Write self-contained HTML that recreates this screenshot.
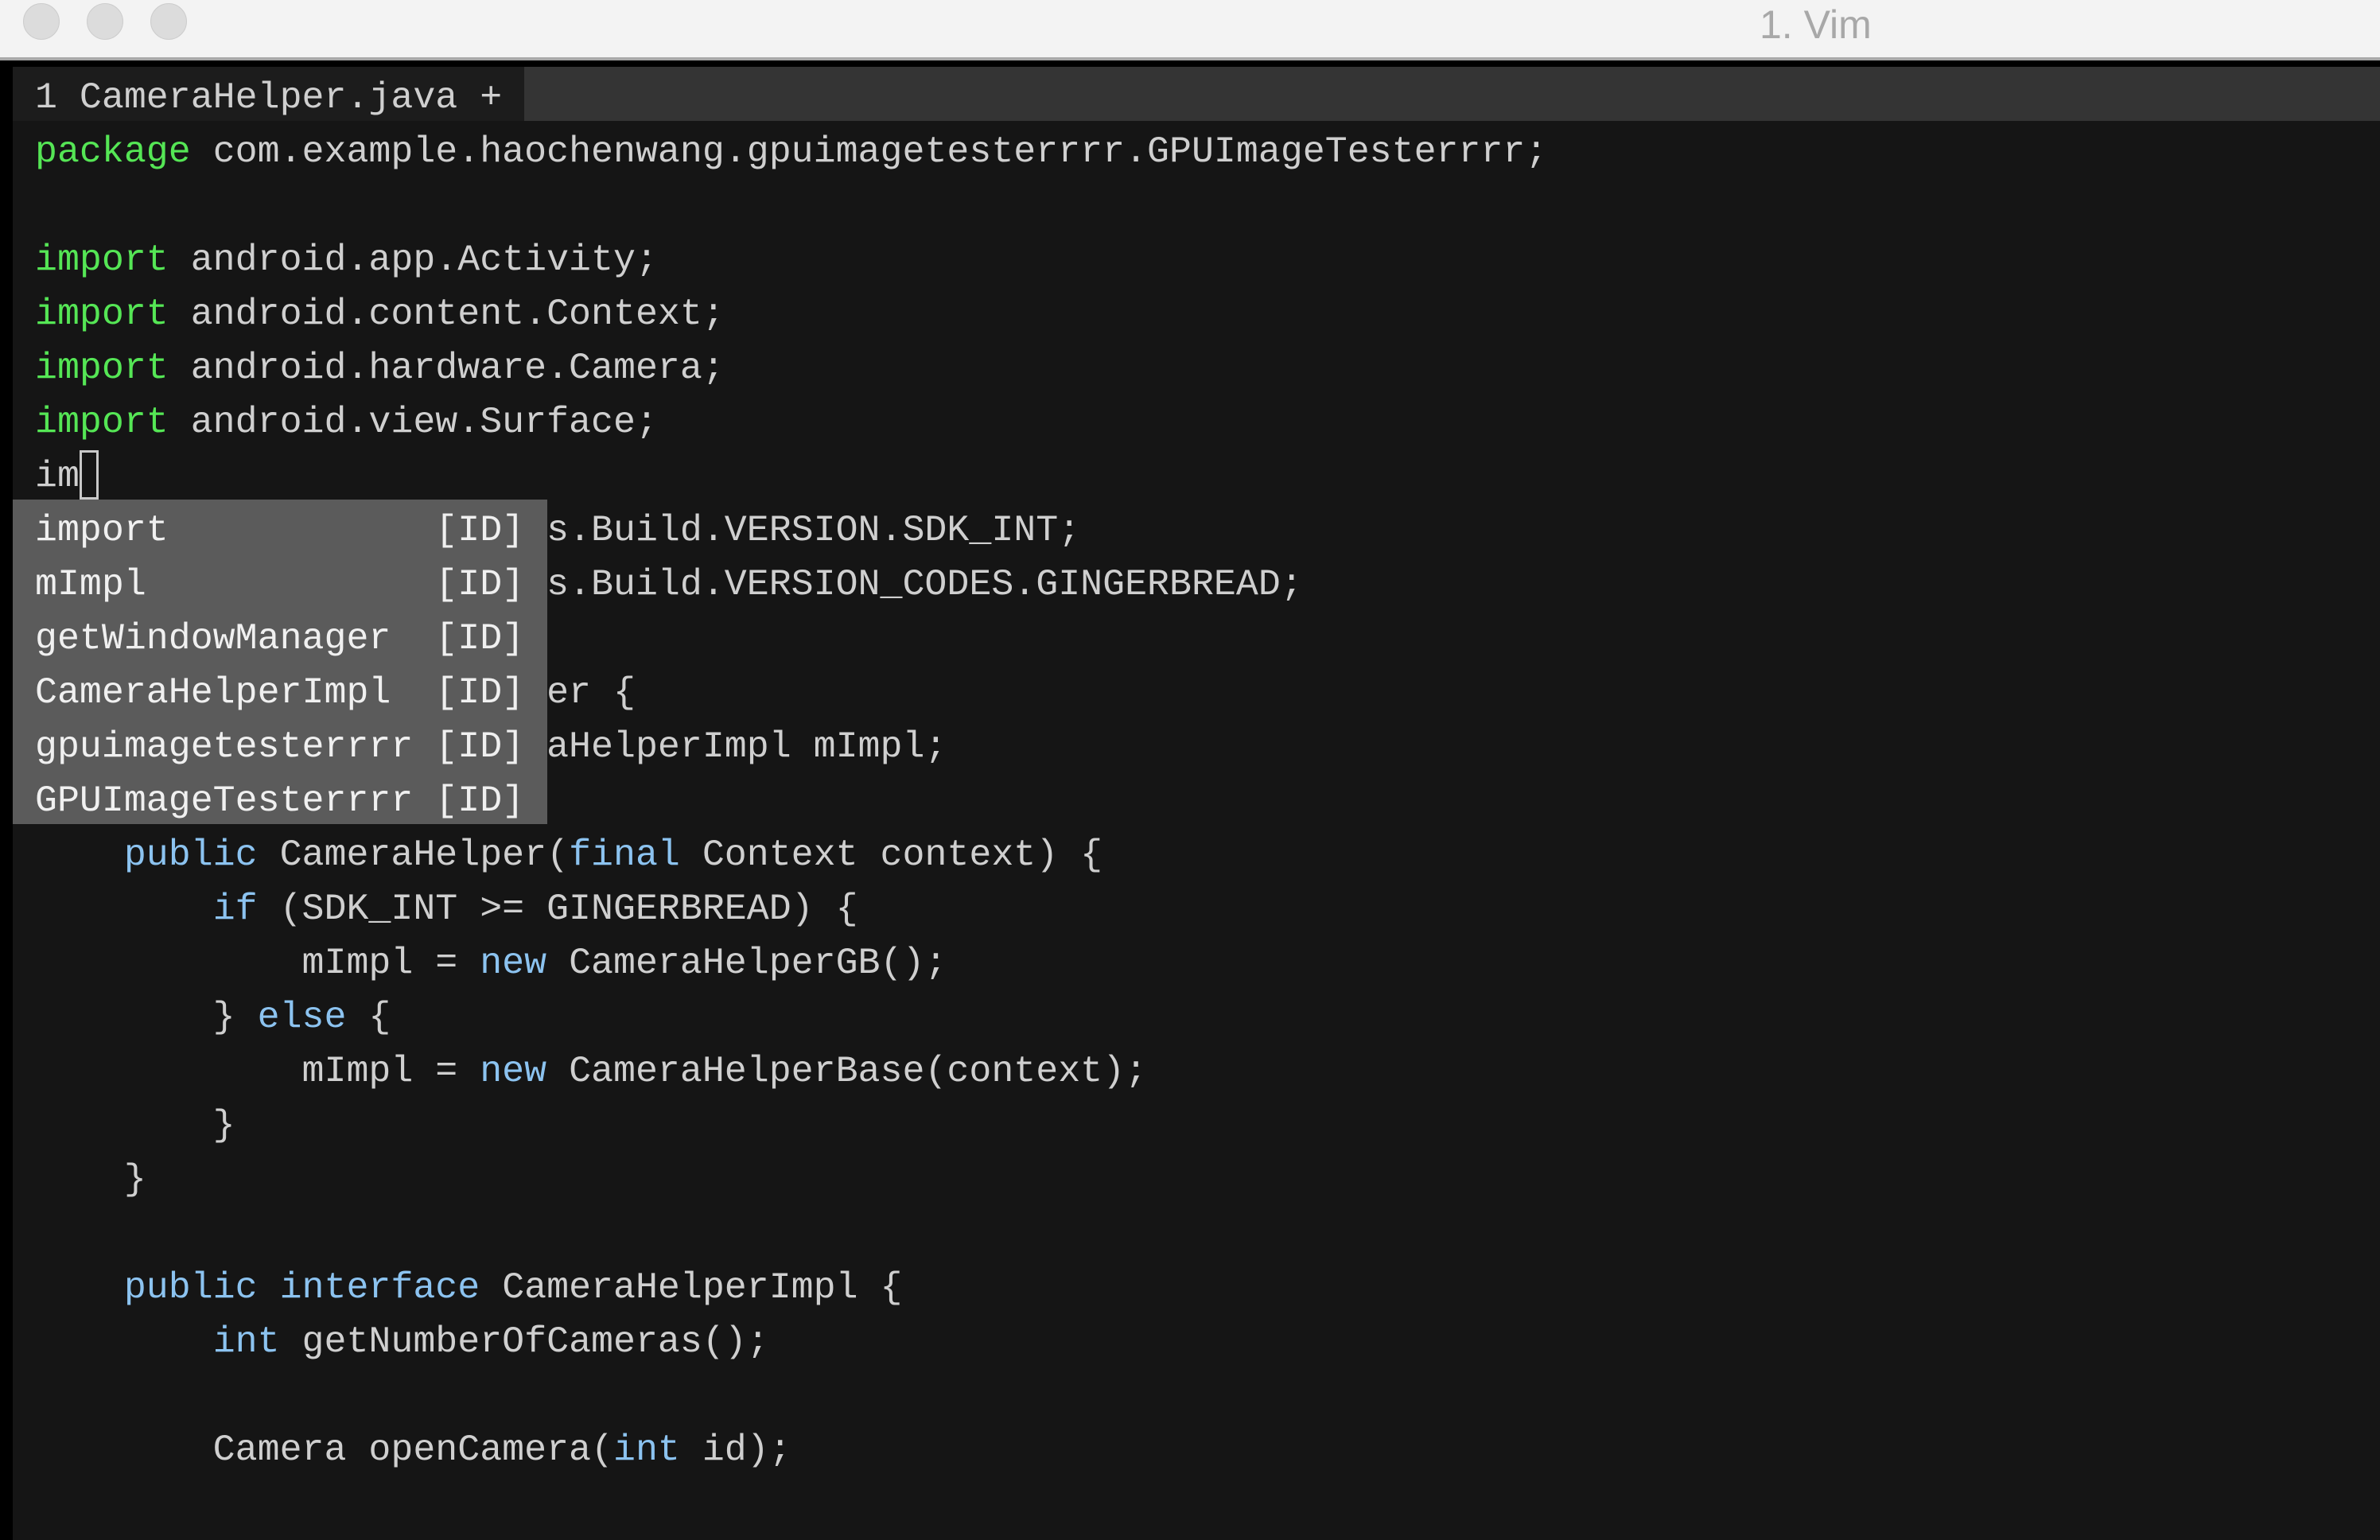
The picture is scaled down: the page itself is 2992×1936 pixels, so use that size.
<!DOCTYPE html>
<html><head><meta charset="utf-8"><style>
html,body{margin:0;padding:0;width:2992px;height:1936px;overflow:hidden;background:#151515;}
#wrap{position:relative;width:2992px;height:1936px;overflow:hidden;}
#title{position:absolute;left:0;top:0;width:2992px;height:72px;background:#f3f3f3;border-bottom:4px solid #a9a9a9;}
.dot{position:absolute;top:4px;width:46px;height:46px;border-radius:50%;background:#dcdcdc;border:1px solid #cdcdcd;box-sizing:border-box;}
#ttl{position:absolute;left:2212px;top:2px;font:50px "Liberation Sans",sans-serif;color:#a8a8a8;}
#blk{position:absolute;left:0;top:76px;width:2992px;height:8px;background:#000;}
#lb{position:absolute;left:0;top:76px;width:16px;height:1860px;background:#000;}
#tabbar{position:absolute;left:16px;top:84px;width:2976px;height:68px;background:#343434;}
#tab{position:absolute;left:16px;top:84px;width:643px;height:68px;background:#1c1c1c;}
#code{position:absolute;left:44px;top:89px;margin:0;font:46.6px/68px "Liberation Mono",monospace;color:#cfcfcf;white-space:pre;}
.g{color:#55e655}.b{color:#8cc3f0}
#pop{position:absolute;left:16px;top:628px;width:672px;height:408px;background:#5b5b5b;}
#popt{position:absolute;left:44px;top:633px;margin:0;font:46.6px/68px "Liberation Mono",monospace;color:#f0f0f0;white-space:pre;}
#cur{position:absolute;left:100px;top:566px;width:24px;height:62px;border:3px solid #c8c8c8;box-sizing:border-box;}
</style></head><body><div id="wrap">
<div id="title">
<div class="dot" style="left:29px"></div><div class="dot" style="left:109px"></div><div class="dot" style="left:189px"></div>
<div id="ttl">1. Vim</div>
</div>
<div id="blk"></div><div id="lb"></div>
<div id="tabbar"></div><div id="tab"></div>
<pre id="code">1 CameraHelper.java +
<span class="g">package</span> com.example.haochenwang.gpuimagetesterrrr.GPUImageTesterrrr;

<span class="g">import</span> android.app.Activity;
<span class="g">import</span> android.content.Context;
<span class="g">import</span> android.hardware.Camera;
<span class="g">import</span> android.view.Surface;
im
                       s.Build.VERSION.SDK_INT;
                       s.Build.VERSION_CODES.GINGERBREAD;

                       er {
                       aHelperImpl mImpl;

    <span class="b">public</span> CameraHelper(<span class="b">final</span> Context context) {
        <span class="b">if</span> (SDK_INT &gt;= GINGERBREAD) {
            mImpl = <span class="b">new</span> CameraHelperGB();
        } <span class="b">else</span> {
            mImpl = <span class="b">new</span> CameraHelperBase(context);
        }
    }

    <span class="b">public</span> <span class="b">interface</span> CameraHelperImpl {
        <span class="b">int</span> getNumberOfCameras();

        Camera openCamera(<span class="b">int</span> id);

        Camera openDefaultCamera();</pre>
<div id="pop"></div>
<pre id="popt">import            [ID]
mImpl             [ID]
getWindowManager  [ID]
CameraHelperImpl  [ID]
gpuimagetesterrrr [ID]
GPUImageTesterrrr [ID]</pre>
<div id="cur"></div>
</div></body></html>
